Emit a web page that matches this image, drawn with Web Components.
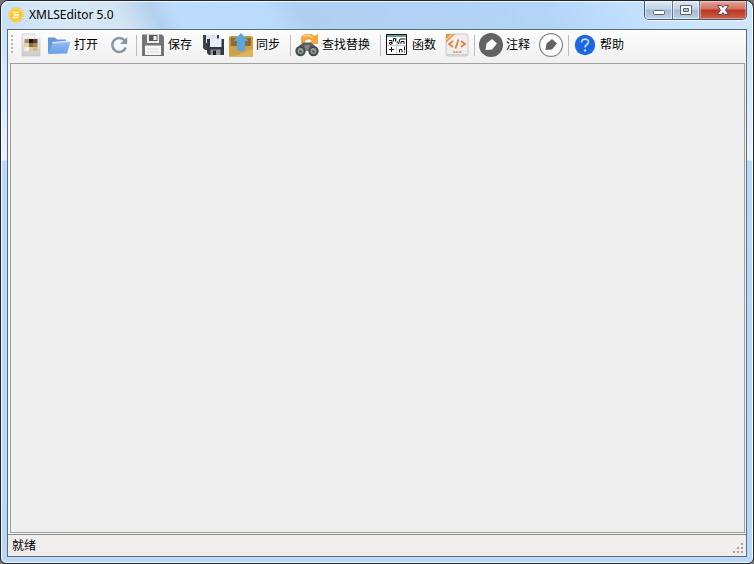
<!DOCTYPE html>
<html lang="zh-CN">
<head>
<meta charset="utf-8">
<title>XMLSEditor 5.0</title>
<style>
html,body{height:100%;margin:0}
body{background:#77716f;font:12px/16px "Noto Sans","Noto Sans CJK SC",sans-serif;color:#000;overflow:hidden}
</style>
</head>
<body>
<app-window caption="XMLSEditor 5.0">
  <tool-bar slot="toolbar">
    <tool-button icon="doc" label="新建"></tool-button>
    <tool-button icon="folder">打开</tool-button>
    <tool-button icon="refresh" label="刷新"></tool-button>
    <tool-separator></tool-separator>
    <tool-button icon="save">保存</tool-button>
    <tool-button icon="saveall" label="全部保存"></tool-button>
    <tool-button icon="sync">同步</tool-button>
    <tool-separator></tool-separator>
    <tool-button icon="find">查找替换</tool-button>
    <tool-separator></tool-separator>
    <tool-button icon="func">函数</tool-button>
    <tool-button icon="css" label="CSS"></tool-button>
    <tool-separator></tool-separator>
    <tool-button icon="note">注释</tool-button>
    <tool-button icon="unnote" label="取消注释"></tool-button>
    <tool-separator></tool-separator>
    <tool-button icon="help">帮助</tool-button>
  </tool-bar>
  <work-area></work-area>
  <status-bar slot="status">就绪</status-bar>
</app-window>
<script>
const icons = {
  app: `<svg viewBox="0 0 16 16"><circle cx="8" cy="8" r="7.3" fill="#fbdf83" stroke="#e5c45a" stroke-dasharray="2 1"/><circle cx="8" cy="8" r="6.3" fill="#ffc91f"/><path d="M4.500 5.500h6M6 8h5M4.500 10.500h6" stroke="#fff" stroke-width="1.5"/></svg>`,
  doc: `<svg viewBox="0 0 24 24"><defs><linearGradient id="d" x2="0" y2="1"><stop stop-color="#f4f4f4"/><stop offset="1" stop-color="#cbcbcb"/></linearGradient></defs><path d="M3 1h13l5 5v17H3z" fill="url(#d)" stroke="#c4c4c4" stroke-width=".7"/><path d="M16 1v5h5" fill="#fff" stroke="#d4d4d4" stroke-width=".6"/><path d="M5.500 6H10v4H5.500z" fill="#a88f68"/><path d="M10 6h4v4h-4z" fill="#1f1710"/><path d="M14 6h4.500v4H14z" fill="#544030"/><path d="M5.500 10H10v4H5.500z" fill="#e2d2ae"/><path d="M10 10h4v4h-4z" fill="#8a713b"/><path d="M14 10h4.500v4H14z" fill="#a58a5e"/><path d="M5.500 14H10v4H5.500z" fill="#f5eee0"/><path d="M10 14h4v4h-4z" fill="#e2cba0"/><path d="M14 14h4.500v4H14z" fill="#d3b98c"/></svg>`,
  folder: `<svg viewBox="0 0 24 24"><defs><linearGradient id="f" x2="0" y2="1"><stop stop-color="#90baf3"/><stop offset="1" stop-color="#6c9fe8"/></linearGradient></defs><path d="M1 20V4.500h7l2 2h9V11" fill="#6896dc"/><path d="M5 9l16-1.500V10H5z" fill="#d7e7fb"/><path d="M5.500 10.500L23.500 9 20 20.500 1 21z" fill="url(#f)"/><path d="M5.500 10.500L23.500 9" stroke="#a6cbf6" fill="none"/></svg>`,
  refresh: `<svg viewBox="0 0 24 24"><path d="M17.700 7.500A7 7 0 1 0 18.800 14.500" fill="none" stroke="#8099a4" stroke-width="2.400"/><path d="M20.200 4v7h-7.200z" fill="#8099a4"/></svg>`,
  save: `<svg viewBox="0 0 24 24"><path d="M1 1.500h20l2 2V23H1z" fill="#747476"/><path d="M6 1.500h12V10H6z" fill="#ececee"/><path d="M8 2h8.500v6H8z" fill="#58585a"/><path d="M12.500 3h3v4h-3z" fill="#f5f5f5"/><path d="M4 12.500h16V22H4z" fill="#f6f6f6"/><path d="M6 16h12M6 19h12" stroke="#dcdcdc"/></svg>`,
  saveall: `<svg viewBox="0 0 24 24"><path d="M2 2h16v15H4l-2-2z" fill="#3d414c"/><path d="M5 2h11v8H5z" fill="#dfe5ee"/><path d="M6 6h17v16H8l-2-2z" fill="#343741"/><path d="M9 5.500h11.500V14H9z" fill="#e9eff8"/><path d="M9.500 16.500h10V22h-10z" fill="#8e949c"/><path d="M12 17.500h3V22h-3z" fill="#1e2027"/></svg>`,
  sync: `<svg viewBox="0 0 24 24"><defs><linearGradient id="s" x2="1" y2="1"><stop stop-color="#bd8d3c"/><stop offset="1" stop-color="#dfb14d"/></linearGradient></defs><path d="M0 4l2-1h20l2 1v19.500H0z" fill="url(#s)"/><path d="M2 5h20v8H2z" fill="#8f6c2e"/><path d="M0 13.500h7l2 2h7l2-2h6v10H0z" fill="#d0a148"/><path d="M4 23.500L24 16v7.500z" fill="#deb45a"/><path d="M12 0l7.500 8H16v9q-4 3-8 0V8H4.500z" fill="#58a8dc"/></svg>`,
  find: `<svg viewBox="0 0 24 24"><path d="M6 10V4Q7.500 1 12 1h5l2.500 2L23 1v10H13l4-3-2.500-1.500Q10 6 10 10z" fill="#f5a742"/><path d="M8 4q5-4 10 1" stroke="#ffd08a" stroke-width="1.500" fill="none"/><path d="M4 13l4-3.500h8l4 3.500 2 5H2z" fill="#5a5f60"/><path d="M9.500 12h5v6h-5z" fill="#808685"/><circle cx="5.500" cy="18" r="5.200" fill="#474c4d"/><circle cx="18.500" cy="18" r="5.200" fill="#474c4d"/><circle cx="5.500" cy="18" r="3" fill="#969e9c"/><circle cx="18.500" cy="18" r="3" fill="#969e9c"/><circle cx="5.500" cy="18.500" r="1.300" fill="#4c5353"/><circle cx="18.500" cy="18.500" r="1.300" fill="#4c5353"/></svg>`,
  func: `<svg viewBox="0 0 24 24"><path d="M1.500 1.500h20v20h-20z" fill="#fff" stroke="#111"/><path d="M2 2h19v2H2z" fill="#6f98ae"/><path d="M11.500 5v16M2 12.500h19" stroke="#c5c5c5"/><g fill="none" stroke="#111"><path d="M4 7.500h3V11H4.500V9.500H7M8.500 8.500v-3h2v3M12.500 8.500l1 2.500 1.500-5h5.500M16 11V8.500h3V11M4 16.500h5M6.500 14v5M14.500 19.500v-3h2.500v3M19.500 13.500v4M19.500 18.500v1"/></g></svg>`,
  css: `<svg viewBox="0 0 24 24"><rect x="1" y="1" width="22" height="22" rx="2" fill="#f0efee" stroke="#cacaca"/><path d="M1 21h22v1.500H1z" fill="#cfcfcf"/><path d="M1 1h9L1 10z" fill="#e59243"/><path d="M7 1L1 7" stroke="#f9d1a5" stroke-width="1.200"/><path d="M8 8l-4 3 4 3M16 8l4 3-4 3M13.500 6.500l-3 9" fill="none" stroke="#e9793c" stroke-width="1.700"/><path d="M8 19h2.500M11 19h2.500M14 19h2.500" stroke="#efa477" stroke-width="2"/></svg>`,
  note: `<svg viewBox="0 0 24 24"><circle cx="12" cy="12" r="12" fill="#626262"/><path d="M6.500 17l1-6.500L13 6l5 4.500-5 6z" fill="#fff"/></svg>`,
  unnote: `<svg viewBox="0 0 24 24"><circle cx="12" cy="12" r="11.400" fill="#fff" stroke="#858585" stroke-width="1.200"/><path d="M6.500 17l1-6.500L13 6l5 4.500-5 6z" fill="#626262"/></svg>`,
  help: `<svg viewBox="0 0 24 24"><circle cx="12" cy="12" r="10.200" fill="#1b68e3"/><path d="M8.500 9.500c0-4.500 7-4.500 7-.5 0 2.600-3.500 2.500-3.500 5.500" fill="none" stroke="#c5dafb" stroke-width="1.700"/><circle cx="12" cy="17.500" r="1.200" fill="#c5dafb"/></svg>`,
  min: `<svg viewBox="0 0 16 16"><rect x="2.500" y="8.500" width="11" height="4" rx="1" fill="#fff" stroke="#5b6274"/></svg>`,
  max: `<svg viewBox="0 0 16 16"><path fill-rule="evenodd" d="M2.500 3.500h11v9h-11zM5.500 6.500v3h5v-3z" fill="#fff" stroke="#5b6274"/></svg>`,
  close: `<svg viewBox="0 0 16 16"><path d="M2.500 3.500h4L8 5.500l1.500-2h4L10.500 8l3 4.500h-4L8 10.500l-1.500 2h-4l3-4.500z" fill="#fff" stroke="#5a4a56"/></svg>`
};
class UiElement extends HTMLElement {
  constructor() { super(); this.attachShadow({mode: 'open'}); }
  connectedCallback() { this.shadowRoot.innerHTML = this.render(); }
}
customElements.define('ui-icon', class extends UiElement {
  render() { return `<style>:host{display:block;width:var(--icon-size,24px);height:var(--icon-size,24px);flex:none}svg{display:block;width:100%;height:100%}</style>${icons[this.getAttribute('name')]}`; }
});
customElements.define('tool-button', class extends UiElement {
  render() {
    const text = this.textContent.trim(), label = this.getAttribute('label');
    return `<style>:host{display:block;flex:none}
    button{display:flex;align-items:center;gap:3px;height:24px;padding:0 ${text ? 7 : 2}px 0 2px;border:0;background:none;font:inherit;color:inherit;white-space:nowrap}</style>
    <button type="button"${label ? ` aria-label="${label}"` : ''}><ui-icon name="${this.getAttribute('icon')}"></ui-icon>${text ? '<span><slot></slot></span>' : ''}</button>`;
  }
});
customElements.define('tool-separator', class extends UiElement {
  render() { return `<style>:host{display:block;flex:none;width:1px;height:21px;margin:0 2px 0 3px;background:#bdbdbd}</style>`; }
});
customElements.define('tool-bar', class extends UiElement {
  render() {
    return `<style>:host{display:flex;align-items:center;padding:3px 2px 6px 3px;background:linear-gradient(#fdfdfd,#f0f0f0)}
    i{width:2px;height:20px;margin-right:4px;background:repeating-linear-gradient(#b8b8b8 0 2px,transparent 2px 4px)}</style><i></i><slot></slot>`;
  }
});
customElements.define('work-area', class extends UiElement {
  render() { return `<style>:host{display:block;flex:1;margin:0 1px 1px 2px;border:1px solid #a0a0a0;background:#efefef}</style>`; }
});
customElements.define('status-bar', class extends UiElement {
  render() {
    return `<style>:host{display:flex;justify-content:space-between;align-items:center;height:21px;padding:0 2px 0 4px;border-top:1px solid #8c8c8c;background:#f1edec}
    svg{width:12px;height:12px;align-self:flex-end;margin-bottom:2px}</style><span><slot></slot></span>
    <svg viewBox="0 0 12 12"><path d="M9 1h2v2H9zM9 5h2v2H9zM9 9h2v2H9zM5 5h2v2H5zM5 9h2v2H5zM1 9h2v2H1z" fill="#a9a5a4"/></svg>`;
  }
});
customElements.define('window-controls', class extends UiElement {
  render() {
    return `<style>:host{display:flex;height:18px;border:1px solid #4d5b70;border-top:0;border-radius:0 0 5px 5px;overflow:hidden;box-shadow:0 1px 0 #e8f4ff;--icon-size:16px}
    button{display:grid;place-items:center;width:28px;padding:0;border:0;border-right:1px solid #66758b;background:linear-gradient(#dce8f5,#c2d3e6 45%,#a5b8cf 50%,#bfd3ea);box-shadow:inset 0 0 0 1px #ffffff80}
    button:nth-of-type(2){width:27px}
    button:last-of-type{width:46px;border:0;background:linear-gradient(#e5a89a,#d0705e 45%,#b83520 50%,#cf6248);box-shadow:inset 0 0 0 1px #ffffff60}</style>
    <button type="button" aria-label="最小化"><ui-icon name="min"></ui-icon></button><button type="button" aria-label="最大化"><ui-icon name="max"></ui-icon></button><button type="button" aria-label="关闭"><ui-icon name="close"></ui-icon></button>`;
  }
});
customElements.define('app-window', class extends UiElement {
  render() {
    return `<style>
    :host{display:block;height:100%}
    .frame{box-sizing:border-box;height:100%;display:flex;flex-direction:column;border:1px solid #20242e;border-radius:8px 8px 6px 6px;padding:0 6px 6px;box-shadow:inset 0 0 0 1px #f5faff;
      background:linear-gradient(#c5dffa,#e9f3fd 159px,#b9dafa 160px,#b9d9f9)}
    header{display:flex;align-items:flex-start;height:28px;margin:0 -5px;padding:0 5px 0 0;border-radius:7px 7px 0 0;
      background:linear-gradient(60deg,#c5dffa 0,#d9e8f6 8%,#d5e5f4 16%,#b3d1ee 21%,#bbdcfc 24%,#badcfc 36%,#afd0f1 40%,#b2d4f7 72%,#badbfd 78%,#cfe6fd 92%);box-shadow:inset 0 1px 0 #f5faff}
    h1{flex:1;display:flex;align-items:center;gap:5px;margin:0;padding:5px 0 0 6px;height:18px;font:inherit;--icon-size:16px}
    main{flex:1;min-height:0;display:flex;flex-direction:column;border:1px solid #5c6b78;background:#f5f5f5}
    </style>
    <div class="frame"><header><h1><ui-icon name="app"></ui-icon><span>${this.getAttribute('caption')}</span></h1><window-controls></window-controls></header>
    <main><slot name="toolbar"></slot><slot></slot><slot name="status"></slot></main></div>`;
  }
});
</script>
</body>
</html>
